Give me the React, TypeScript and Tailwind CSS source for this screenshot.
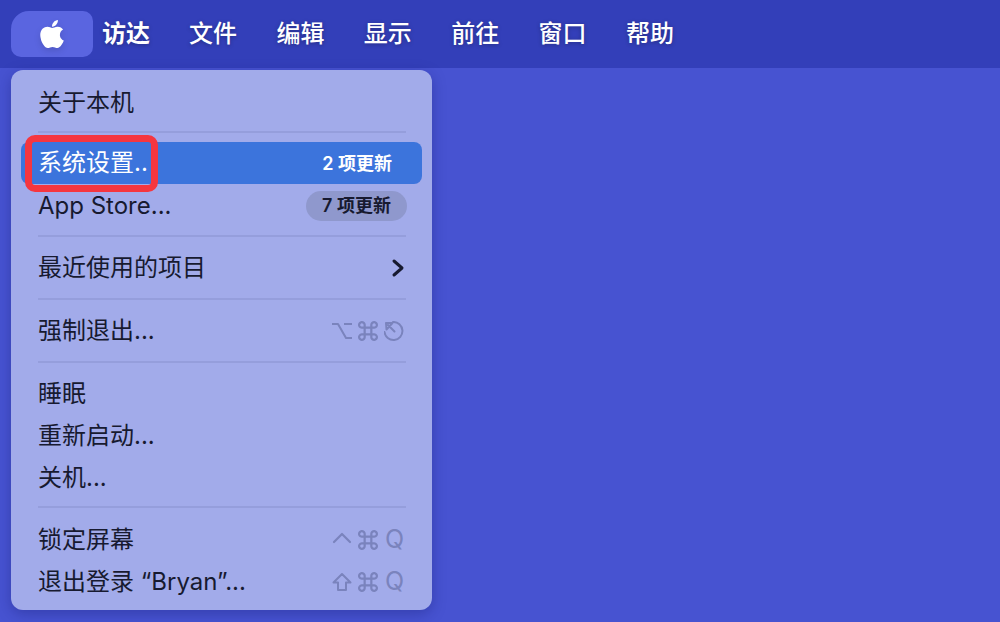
import React from 'react';
import { FaApple } from 'react-icons/fa';

const font = "font-['Inter','Noto_Sans_CJK_SC',sans-serif]";

const menus = ['文件', '编辑', '显示', '前往', '窗口', '帮助'];

function Glyph({ children, box = '0 0 20 20' }: { children: React.ReactNode; box?: string }) {
  return (
    <svg width="20" height="20" viewBox={box} fill="none" stroke="currentColor" strokeWidth="2" strokeLinecap="round" strokeLinejoin="round">
      {children}
    </svg>
  );
}

// command key
const Cmd = () => (
  <Glyph box="1 1 18 18">
    <path d="M7 7h6v6H7zM7 7H5a2.5 2.5 0 1 1 2-2.5V7zM13 7h2a2.5 2.5 0 1 0-2-2.5V7zM7 13H5a2.5 2.5 0 1 0 2 2.5V13zM13 13h2a2.5 2.5 0 1 1-2 2.5V13z" />
  </Glyph>
);
const Option = () => (
  <Glyph>
    <path d="M0 3h6l8 14h6M12 3h8" strokeLinecap="butt" />
  </Glyph>
);
const Power = () => (
  <Glyph>
    <path d="M9 1a9 9 0 1 1-8.500 10" />
    <path d="M2 2h6.500L2.500 8.500zM4 4l6.500 6.500" />
  </Glyph>
);
const Ctrl = () => (
  <Glyph>
    <path d="M2 12l8-8 8 8" strokeWidth="2.2" />
  </Glyph>
);
const Shift = () => (
  <Glyph>
    <path d="M10 2l8.500 8.500H14V18H6v-7.500H1.500z" />
  </Glyph>
);
const Q = () => <span className="w-[20px] text-right text-[25px] leading-none">Q</span>;

function Keys({ children }: { children: React.ReactNode }) {
  return <div className="flex items-center gap-[6px] mr-[3px] text-[#7a83bd]">{children}</div>;
}

function Row({ label, right }: { label: string; right?: React.ReactNode }) {
  return (
    <div className="h-[42px] pl-[27px] pr-[25px] pt-[1px] flex items-center justify-between text-[24px] text-[#171a30]">
      <span>{label}</span>
      {right}
    </div>
  );
}

function Sep({ h }: { h: string }) {
  return (
    <div className={`${h} pl-[27px] pr-[26px] flex items-center`}>
      <div className="h-[2px] w-full bg-[#959edc]" />
    </div>
  );
}

export default function App() {
  return (
    <div className={`relative w-[1000px] h-[622px] overflow-hidden bg-[#4753d1] ${font}`}>
      <header className="h-[68px] bg-[#333fb9] flex items-center pl-[11px] text-white text-[24px]">
        <div className="w-[82px] h-[46px] rounded-[10px] rounded-tl-[18px] bg-[#5a65e0] flex items-center justify-center">
          <FaApple className="text-[32px] drop-shadow-md" />
        </div>
        <span className="ml-[9px] font-bold w-[87px] [text-shadow:0_1px_4px_rgba(0,0,0,0.3)]">访达</span>
        <nav className="flex gap-[40px] font-medium [text-shadow:0_1px_4px_rgba(0,0,0,0.3)]">
          {menus.map((m) => (
            <span key={m} className="w-[47.4px] whitespace-nowrap">{m}</span>
          ))}
        </nav>
      </header>

      <div className="absolute left-[11px] top-[70px] w-[421px] h-[540px] rounded-[12px] bg-[#a2abea] pt-[11px] shadow-[0_4px_14px_rgba(20,25,110,0.35)]">
        <Row label="关于本机" />
        <Sep h="h-[17px] mb-[2px]" />
        <div className="mx-[10px] h-[42px] pl-[17px] pr-[30px] rounded-[8px] bg-[#3c74dc] flex items-center justify-between text-white text-[24px]">
          <span>系统设置..</span>
          <span className="text-[18px] font-semibold">2 项更新</span>
        </div>
        <Row
          label="App Store..."
          right={
            <span className="h-[30px] w-[101px] rounded-full bg-[#8f98cd] flex items-center justify-center text-[18px] font-semibold">
              7 项更新
            </span>
          }
        />
        <Sep h="h-[20px]" />
        <Row
          label="最近使用的项目"
          right={
            <svg className="mr-[2px]" width="14" height="20" viewBox="0 0 14 20" fill="none" stroke="#171a30" strokeWidth="3" strokeLinecap="round" strokeLinejoin="round">
              <path d="M3 3l8 7-8 7" />
            </svg>
          }
        />
        <Sep h="h-[21px]" />
        <Row label="强制退出..." right={<Keys><Option /><Cmd /><Power /></Keys>} />
        <Sep h="h-[21px]" />
        <Row label="睡眠" />
        <Row label="重新启动..." />
        <Row label="关机..." />
        <Sep h="h-[17px] mb-[3px]" />
        <Row label="锁定屏幕" right={<Keys><Ctrl /><Cmd /><Q /></Keys>} />
        <Row label="退出登录 “Bryan”..." right={<Keys><Shift /><Cmd /><Q /></Keys>} />
      </div>

      {/* red annotation box */}
      <div className="absolute left-[25px] top-[135px] w-[133px] h-[57px] rounded-[10px] border-[7px] border-[#f5363f]" />
    </div>
  );
}
